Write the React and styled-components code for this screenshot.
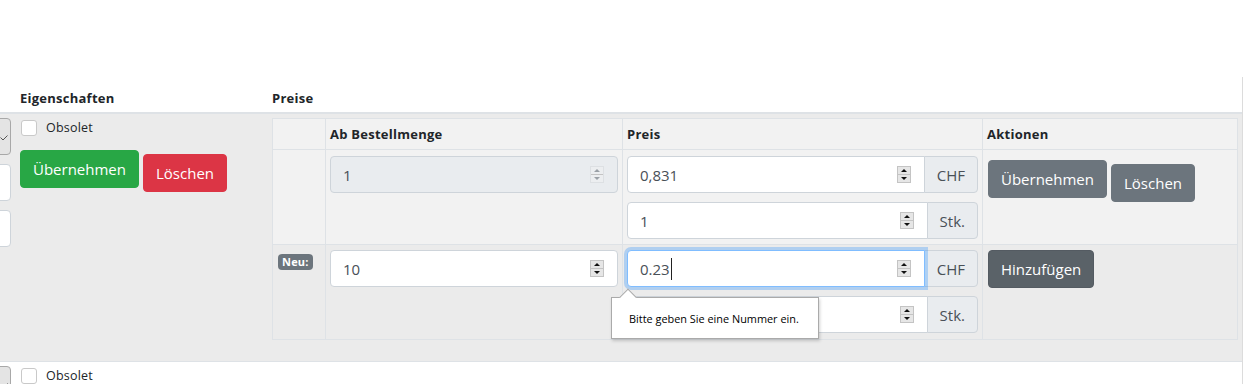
import React from 'react';
import styled, { createGlobalStyle, css } from 'styled-components';

const GlobalStyle = createGlobalStyle`
  *, *::before, *::after { box-sizing: border-box; }
  html, body {
    margin: 0;
    padding: 0;
    background: #fff;
    overflow: hidden;
  }
  body {
    font-family: "Open Sans", "Noto Sans", sans-serif;
    color: #212529;
  }
`;

const Wrap = styled.div`
  margin-top: 77px;
  width: 1243px;
  border-right: 1px solid #dcdcdc;
`;

const Row = styled.div`
  display: grid;
  grid-template-columns: 16px 252px 1fr;
  background: ${p => p.$bg || '#fff'};
  ${p => p.$head
    ? css`border-bottom: 2px solid #dee2e6;`
    : css`border-bottom: 1px solid #dee2e6;`}
`;

const HeadCell = styled.div`
  padding: 11px 4px 4px;
  font-size: 13px;
  font-weight: 700;
  letter-spacing: 0.25px;
  line-height: 20px;
`;

const Cell = styled.div`
  padding: 4px 4px ${p => p.$pb || 4}px;
  min-width: 0;
`;

const LeftCell = styled.div`
  padding: 4px 5px 4px 0;
  overflow: hidden;
  display: flex;
  flex-direction: column;
  align-items: flex-end;
  gap: 9px;
`;

const FakeSelect = styled.div`
  flex-shrink: 0;
  width: 120px;
  height: 37px;
  background: #e4e4e4;
  border: 1px solid #a8a8a8;
  border-radius: 4px;
  display: flex;
  align-items: center;
  justify-content: flex-end;
  padding: 2px 2px 0 0;
  color: #555;
`;

const FakeInput = styled.div`
  flex-shrink: 0;
  width: 120px;
  height: 37px;
  background: #fff;
  border: 1px solid #ced4da;
  border-radius: 4px;
`;

const CheckRow = styled.label`
  display: flex;
  align-items: center;
  height: 20px;
  font-size: 12.5px;
  letter-spacing: 0.2px;
  line-height: 20px;
`;

const CheckBox = styled.span`
  width: 16px;
  height: 16px;
  margin-left: 1px;
  margin-right: 9px;
  background: #fff;
  border: 1px solid #c9c9c9;
  border-radius: 3px;
`;

const ButtonRow = styled.div`
  display: flex;
  align-items: flex-start;
  gap: 4px;
  margin-top: ${p => p.$mt || 0}px;
`;

const colors = {
  success: ['#28a745', '#28a745'],
  danger: ['#dc3545', '#dc3545'],
  secondary: ['#6c757d', '#6c757d'],
  active: ['#5a6268', '#545b62'],
};

const Button = styled.button`
  font-family: inherit;
  font-size: 15px;
  line-height: 24px;
  padding: 6px 12px;
  border-radius: 4px;
  color: #fff;
  background: ${p => colors[p.$variant][0]};
  border: 1px solid ${p => colors[p.$variant][1]};
  margin-top: ${p => (p.$drop ? 4 : 0)}px;
  cursor: pointer;
`;

const Grid = styled.div`
  display: grid;
  grid-template-columns: 53px 297px 360px 255px;
  border-left: 1px solid #dee2e6;
  border-top: 1px solid #dee2e6;
`;

const TCell = styled.div`
  position: relative;
  border-right: 1px solid #dee2e6;
  border-bottom: 1px solid #dee2e6;
  background: ${p => p.$bg || 'transparent'};
  padding: ${p => p.$pad || '5px 4px'};
  display: flex;
  flex-direction: column;
  align-items: stretch;
  gap: 9px;
`;

const TH = styled(TCell)`
  display: block;
  font-size: 13px;
  font-weight: 700;
  letter-spacing: 0.25px;
  line-height: 20px;
`;

const Badge = styled.span`
  align-self: flex-start;
  margin-top: 4px;
  padding: 0 4px;
  height: 16px;
  line-height: 16px;
  font-size: 11px;
  font-weight: 700;
  letter-spacing: 0.2px;
  color: #fff;
  background: #6c757d;
  border-radius: 4px;
`;

const InputGroup = styled.div`
  display: flex;
  width: 100%;
`;

const InputBox = styled.div`
  position: relative;
  flex: ${p => (p.$grouped ? '1 1 auto' : 'none')};
  height: 37px;
  display: flex;
  align-items: center;
  justify-content: space-between;
  padding: 0 13px 0 12px;
  font-size: 15px;
  color: #495057;
  background: ${p => (p.$disabled ? '#e9ecef' : '#fff')};
  border: 1px solid ${p => (p.$focus ? '#80bdff' : '#ced4da')};
  border-radius: ${p => (p.$grouped ? '4px 0 0 4px' : '4px')};
  ${p => p.$focus && css`
    z-index: 2;
    box-shadow: 0 0 0 3px rgba(0, 123, 255, 0.25);
  `}
`;

const Value = styled.span`
  display: flex;
  align-items: center;
`;

const Caret = styled.span`
  display: inline-block;
  width: 1px;
  height: 22px;
  margin-left: 1px;
  background: #222;
`;

const Addon = styled.div`
  flex: none;
  height: 37px;
  display: flex;
  align-items: center;
  padding: 0 12px;
  margin-left: -1px;
  font-size: 15px;
  color: #495057;
  background: #e9ecef;
  border: 1px solid #ced4da;
  border-radius: 0 4px 4px 0;
`;

const Spinner = styled.div`
  width: 14px;
  height: 17px;
  display: flex;
  flex-direction: column;
  background: ${p => (p.$dim ? '#eceef0' : '#e6e6e6')};
  border: 1px solid ${p => (p.$dim ? '#dde0e3' : '#c4c4c4')};
`;

const SpinHalf = styled.div`
  flex: 1;
  display: flex;
  align-items: center;
  justify-content: center;
  & + & {
    border-top: 1px solid ${p => (p.$dim ? '#dde0e3' : '#c4c4c4')};
  }
`;

const Tri = styled.span`
  width: 0;
  height: 0;
  border-left: 3px solid transparent;
  border-right: 3px solid transparent;
  ${p => (p.$down
    ? css`border-top: 3px solid ${p.$dim ? '#9aa0a6' : '#111'};`
    : css`border-bottom: 3px solid ${p.$dim ? '#9aa0a6' : '#111'};`)}
`;

const Tooltip = styled.div`
  position: absolute;
  z-index: 10;
  top: 52px;
  left: -12px;
  width: 208px;
  height: 42px;
  display: flex;
  align-items: center;
  padding: 0 12px 0 17px;
  background: #fff;
  border: 1px solid #aaa;
  box-shadow: 1px 2px 3px rgba(0, 0, 0, 0.18);
  font-size: 10.9px;
  color: #000;
  white-space: nowrap;
  &::before {
    content: '';
    position: absolute;
    top: -7px;
    left: 10px;
    width: 12px;
    height: 12px;
    background: #fff;
    border-left: 1px solid #aaa;
    border-top: 1px solid #aaa;
    transform: rotate(45deg);
  }
`;

function Spin({ dim }) {
  return (
    <Spinner $dim={dim}>
      <SpinHalf $dim={dim}><Tri $dim={dim} /></SpinHalf>
      <SpinHalf $dim={dim}><Tri $dim={dim} $down /></SpinHalf>
    </Spinner>
  );
}

function NumberField({ value, unit, disabled, focus, caret }) {
  const box = (
    <InputBox $disabled={disabled} $focus={focus} $grouped={!!unit}>
      <Value>{value}{caret && <Caret />}</Value>
      <Spin dim={disabled} />
    </InputBox>
  );
  if (!unit) return box;
  return (
    <InputGroup>
      {box}
      <Addon>{unit}</Addon>
    </InputGroup>
  );
}

function Chevron() {
  return (
    <svg width="8" height="6" viewBox="0 0 8 6">
      <polyline points="0.5,2.5 3,5 7.5,0.5" fill="none" stroke="#555" strokeWidth="1" />
    </svg>
  );
}

function LeftStub({ inputs }) {
  return (
    <LeftCell>
      <FakeSelect><Chevron /></FakeSelect>
      {inputs && <FakeInput />}
      {inputs && <FakeInput />}
    </LeftCell>
  );
}

function PriceTable() {
  return (
    <Grid>
      <TH $bg="#f2f2f2" />
      <TH $bg="#f2f2f2">Ab Bestellmenge</TH>
      <TH $bg="#f2f2f2">Preis</TH>
      <TH $bg="#f2f2f2">Aktionen</TH>

      <TCell $bg="#f2f2f2" $pad="6px 4px 5px" />
      <TCell $bg="#f2f2f2" $pad="6px 4px 5px">
        <NumberField value="1" disabled />
      </TCell>
      <TCell $bg="#f2f2f2" $pad="6px 4px 5px">
        <NumberField value="0,831" unit="CHF" />
        <NumberField value="1" unit="Stk." />
      </TCell>
      <TCell $bg="#f2f2f2" $pad="6px 4px 5px 5px">
        <ButtonRow $mt={4}>
          <Button $variant="secondary">Übernehmen</Button>
          <Button $variant="secondary" $drop>Löschen</Button>
        </ButtonRow>
      </TCell>

      <TCell $pad="5px 4px 6px 5px">
        <Badge>Neu:</Badge>
      </TCell>
      <TCell $pad="5px 4px 6px">
        <NumberField value="10" />
      </TCell>
      <TCell $pad="5px 4px 6px">
        <NumberField value="0.23" unit="CHF" focus caret />
        <NumberField value="" unit="Stk." />
        <Tooltip>Bitte geben Sie eine Nummer ein.</Tooltip>
      </TCell>
      <TCell $pad="5px 4px 6px 5px">
        <ButtonRow>
          <Button $variant="active">Hinzufügen</Button>
        </ButtonRow>
      </TCell>
    </Grid>
  );
}

export default function App() {
  return (
    <>
      <GlobalStyle />
      <Wrap>
        <Row $head>
          <HeadCell />
          <HeadCell>Eigenschaften</HeadCell>
          <HeadCell>Preise</HeadCell>
        </Row>
        <Row $bg="#ebebeb">
          <LeftStub inputs />
          <Cell>
            <CheckRow><CheckBox />Obsolet</CheckRow>
            <ButtonRow $mt={12}>
              <Button $variant="success">Übernehmen</Button>
              <Button $variant="danger" $drop>Löschen</Button>
            </ButtonRow>
          </Cell>
          <Cell $pb={21}>
            <PriceTable />
          </Cell>
        </Row>
        <Row>
          <LeftStub />
          <Cell>
            <CheckRow><CheckBox />Obsolet</CheckRow>
          </Cell>
          <Cell />
        </Row>
      </Wrap>
    </>
  );
}
